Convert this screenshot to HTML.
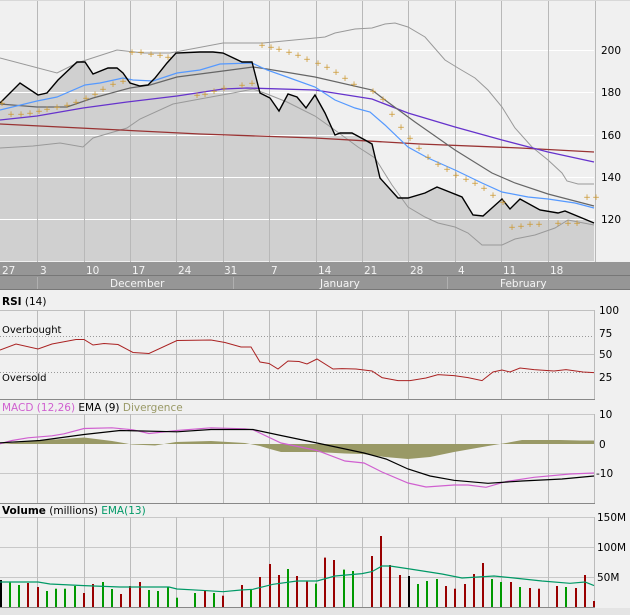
<!DOCTYPE html>
<html><head><style>
html,body{margin:0;padding:0;background:#f0f0f0;}
svg{display:block;font-family:"DejaVu Sans","Liberation Sans",sans-serif;}
</style></head><body>
<svg width="630" height="615" viewBox="0 0 630 615" xmlns="http://www.w3.org/2000/svg">
<rect width="630" height="615" fill="#f0f0f0"/>
<!-- main plot -->
<polygon fill="#d0d0d0" points="0,103 20,83 38,95 47,93 58,80 77,62 85,62 93,74 108,68 117,68 123,73 130,83 140,86 148,85 155,78 167,63 176,53 200,52 207,52 213,52 223,53 242,62 252,62 260,93 270,98 279,111 288,94 297,97 306,108 315,95 325,113 335,135 340,133 352,133 365,140 372,144 380,178 398,198 408,198 425,193 437,187 462,197 473,215 483,216 502,199 510,209 520,199 540,210 558,213 565,211 582,218 594,223 594,261 0,261"/>
<g stroke="#ffffff" stroke-width="1">
<line x1="0" y1="50.5" x2="594" y2="50.5"/><line x1="0" y1="92.5" x2="594" y2="92.5"/><line x1="0" y1="135.5" x2="594" y2="135.5"/><line x1="0" y1="177.5" x2="594" y2="177.5"/><line x1="0" y1="219.5" x2="594" y2="219.5"/>
</g>
<g stroke="#b8b8b8" stroke-width="1">
<line x1="37.5" y1="0" x2="37.5" y2="262"/><line x1="84.5" y1="0" x2="84.5" y2="262"/><line x1="130.5" y1="0" x2="130.5" y2="262"/><line x1="176.5" y1="0" x2="176.5" y2="262"/><line x1="223.5" y1="0" x2="223.5" y2="262"/><line x1="269.5" y1="0" x2="269.5" y2="262"/><line x1="316.5" y1="0" x2="316.5" y2="262"/><line x1="362.5" y1="0" x2="362.5" y2="262"/><line x1="408.5" y1="0" x2="408.5" y2="262"/><line x1="455.5" y1="0" x2="455.5" y2="262"/><line x1="501.5" y1="0" x2="501.5" y2="262"/><line x1="548.5" y1="0" x2="548.5" y2="262"/>
<line x1="595.5" y1="0" x2="595.5" y2="262"/>
</g>
<line x1="0" y1="0.5" x2="630" y2="0.5" stroke="#d8d8d8"/>
<g fill="none" stroke-width="1">
<polyline stroke="#999" points="0,58 57,73 77,63 117,50 143,53 170,53 223,43 263,43 315,38 325,37 335,33 355,29 372,28 385,24 395,23 408,27 425,37 445,60 458,68 475,78 488,90 502,107 515,128 532,147 548,160 562,173 567,181 578,184 594,184"/>
<polyline stroke="#999" points="0,148 33,146 60,143 83,147 93,138 127,128 140,119 173,104 200,99 233,93 253,89 267,94 287,102 315,116 332,128 358,147 375,158 392,185 408,207 425,217 438,223 455,227 468,233 482,245 502,245 515,239 535,235 555,228 568,220 594,225"/>
<polyline stroke="#993333" stroke-width="1.3" points="0,124 100,129 200,134 315,138 420,144 520,148 594,152"/>
<polyline stroke="#6633cc" stroke-width="1.3" points="0,120 37,116 83,108 127,102 177,96 223,89 247,88 315,90 372,99 408,113 455,127 502,140 548,152 594,162"/>
<polyline stroke="#666" stroke-width="1.2" points="0,104 37,107 67,107 93,98 130,88 150,85 177,77 223,71 253,67 267,69 315,77 372,90 385,100 415,122 455,150 492,173 515,183 548,194 594,206"/>
<polyline stroke="#5599ff" stroke-width="1.2" points="0,110 37,101 57,97 85,85 100,83 123,78 133,80 153,81 177,73 200,70 220,64 252,63 267,70 287,77 315,87 335,100 355,108 370,112 385,125 408,147 428,158 455,170 482,183 502,192 528,197 548,199 575,203 594,208"/>
<polyline stroke="#000" stroke-width="1.4" points="0,103 20,83 38,95 47,93 58,80 77,62 85,62 93,74 108,68 117,68 123,73 130,83 140,86 148,85 155,78 167,63 176,53 200,52 207,52 213,52 223,53 242,62 252,62 260,93 270,98 279,111 288,94 297,97 306,108 315,95 325,113 335,135 340,133 352,133 365,140 372,144 380,178 398,198 408,198 425,193 437,187 462,197 473,215 483,216 502,199 510,209 520,199 540,210 558,213 565,211 582,218 594,223"/>
</g>
<g fill="#cc9933" font-size="9" text-anchor="middle" font-family="DejaVu Sans,sans-serif">
<text x="2" y="106">+</text><text x="11" y="117">+</text><text x="21" y="117">+</text><text x="30" y="116">+</text><text x="39" y="114">+</text><text x="47" y="112">+</text><text x="57" y="110">+</text><text x="67" y="108">+</text><text x="76" y="105">+</text><text x="86" y="101">+</text><text x="95" y="97">+</text><text x="103" y="92">+</text><text x="113" y="87">+</text><text x="123" y="84">+</text><text x="132" y="55">+</text><text x="141" y="55">+</text><text x="151" y="57">+</text><text x="160" y="58">+</text><text x="168" y="60">+</text><text x="197" y="98">+</text><text x="205" y="97">+</text><text x="214" y="94">+</text><text x="224" y="91">+</text><text x="242" y="88">+</text><text x="252" y="86">+</text><text x="262" y="48">+</text><text x="271" y="50">+</text><text x="279" y="52">+</text><text x="289" y="55">+</text><text x="298" y="58">+</text><text x="307" y="62">+</text><text x="318" y="66">+</text><text x="327" y="70">+</text><text x="336" y="75">+</text><text x="345" y="81">+</text><text x="354" y="87">+</text><text x="373" y="94">+</text><text x="383" y="102">+</text><text x="392" y="117">+</text><text x="401" y="130">+</text><text x="410" y="141">+</text><text x="419" y="151">+</text><text x="428" y="160">+</text><text x="438" y="167">+</text><text x="447" y="172">+</text><text x="456" y="178">+</text><text x="466" y="182">+</text><text x="475" y="186">+</text><text x="484" y="191">+</text><text x="493" y="198">+</text><text x="503" y="205">+</text><text x="512" y="230">+</text><text x="521" y="229">+</text><text x="530" y="227">+</text><text x="539" y="227">+</text><text x="558" y="226">+</text><text x="568" y="226">+</text><text x="577" y="226">+</text><text x="587" y="200">+</text><text x="596" y="200">+</text>
</g>
<g font-size="10.5" fill="#000">
<text x="601" y="54">200</text><text x="601" y="96">180</text><text x="601" y="139">160</text><text x="601" y="181">140</text><text x="601" y="223">120</text>
</g>
<!-- date bars -->
<rect x="0" y="262" width="630" height="28" fill="#969696"/>
<line x1="0" y1="275.5" x2="630" y2="275.5" stroke="#777"/>
<line x1="0" y1="289.5" x2="630" y2="289.5" stroke="#777"/>
<g stroke="#b0b0b0"><line x1="37.5" y1="277" x2="37.5" y2="289"/><line x1="233.5" y1="277" x2="233.5" y2="289"/><line x1="447.5" y1="277" x2="447.5" y2="289"/></g>
<g fill="#f4f4f4" font-size="10.5">
<text x="2" y="274">27</text><text x="40" y="274">3</text><text x="86" y="274">10</text><text x="132" y="274">17</text><text x="178" y="274">24</text><text x="224" y="274">31</text><text x="271" y="274">7</text><text x="318" y="274">14</text><text x="364" y="274">21</text><text x="410" y="274">28</text><text x="458" y="274">4</text><text x="503" y="274">11</text><text x="550" y="274">18</text>
<text x="110" y="287">December</text><text x="320" y="287">January</text><text x="500" y="287">February</text>
</g>
<!-- RSI -->
<g stroke="#c0c0c0"><line x1="0" y1="310.5" x2="594" y2="310.5"/><line x1="0" y1="354.5" x2="594" y2="354.5"/></g>
<g stroke="#999" stroke-dasharray="1,2"><line x1="0" y1="336.5" x2="594" y2="336.5"/><line x1="0" y1="372.5" x2="594" y2="372.5"/></g>
<g stroke="#bbb" id="vg">
<line x1="37.5" y1="310" x2="37.5" y2="400"/><line x1="84.5" y1="310" x2="84.5" y2="400"/><line x1="130.5" y1="310" x2="130.5" y2="400"/><line x1="176.5" y1="310" x2="176.5" y2="400"/><line x1="223.5" y1="310" x2="223.5" y2="400"/><line x1="269.5" y1="310" x2="269.5" y2="400"/><line x1="316.5" y1="310" x2="316.5" y2="400"/><line x1="362.5" y1="310" x2="362.5" y2="400"/><line x1="408.5" y1="310" x2="408.5" y2="400"/><line x1="455.5" y1="310" x2="455.5" y2="400"/><line x1="501.5" y1="310" x2="501.5" y2="400"/><line x1="548.5" y1="310" x2="548.5" y2="400"/><line x1="594.5" y1="310" x2="594.5" y2="400"/>
</g>
<line x1="0" y1="399.5" x2="595" y2="399.5" stroke="#888"/>
<polyline fill="none" stroke="#aa2222" stroke-width="1" points="0,350 16,344 38,349 52,344 76,339.5 84,339.5 93,345 104,343.5 118,344.5 133,352.5 149,353.5 177,340.5 211,340 225,342.5 241,347 251,347 260,362 269,363.5 278,369 288,361 299,361.5 307,364 317,359 333,369 342,368.6 356,369 372,371 382,377.6 398,380.6 410,380.6 426,378 438,374.6 454,375.6 468,377.6 482,380.6 493,372 502,370 510,372 520,368 534,369.6 554,371 566,369.6 583,372 594,372.6"/>
<text x="2" y="305" font-size="10.5"><tspan font-weight="bold">RSI</tspan> (14)</text>
<text x="2" y="333" font-size="10">Overbought</text>
<text x="2" y="381" font-size="10">Oversold</text>
<g font-size="10.5"><text x="599" y="314">100</text><text x="599" y="337">75</text><text x="599" y="358">50</text><text x="599" y="381">25</text></g>
<!-- MACD -->
<g stroke="#c8c8c8"><line x1="0" y1="414.5" x2="594" y2="414.5"/><line x1="0" y1="473.5" x2="594" y2="473.5"/></g>
<g stroke="#bbb">
<line x1="37.5" y1="414" x2="37.5" y2="503"/><line x1="84.5" y1="414" x2="84.5" y2="503"/><line x1="130.5" y1="414" x2="130.5" y2="503"/><line x1="176.5" y1="414" x2="176.5" y2="503"/><line x1="223.5" y1="414" x2="223.5" y2="503"/><line x1="269.5" y1="414" x2="269.5" y2="503"/><line x1="316.5" y1="414" x2="316.5" y2="503"/><line x1="362.5" y1="414" x2="362.5" y2="503"/><line x1="408.5" y1="414" x2="408.5" y2="503"/><line x1="455.5" y1="414" x2="455.5" y2="503"/><line x1="501.5" y1="414" x2="501.5" y2="503"/><line x1="548.5" y1="414" x2="548.5" y2="503"/><line x1="594.5" y1="414" x2="594.5" y2="503"/>
</g>
<line x1="0" y1="503.5" x2="595" y2="503.5" stroke="#888"/>
<polygon fill="#999966" points="0,444 40,440.5 84,437.5 112,441 132,444.5 155,445.5 176,442 211,441 245,443 260,446 270,449 281,452 317,452 345,453.5 363,454 385,457 408,459 430,457 454,452 488,446 506,443 522,440 560,440 580,440.5 594,440.5 594,444"/>
<polyline fill="none" stroke="#d060d0" stroke-width="1.2" points="0,443.8 12,440.5 28,437.8 52,435.8 64,433.8 84,428.5 112,427.8 133,429.8 149,433.5 177,430.5 211,427.8 245,428.8 253,429.8 281,443 317,450.5 345,461 364,463 382,472 408,483 426,487 454,485 468,485 486,487.3 506,481.6 534,477.3 570,474 594,473"/>
<polyline fill="none" stroke="#000" stroke-width="1.2" points="0,442.8 40,440.5 84,434.5 120,430.5 177,431.8 211,429.5 253,429.5 281,435.5 317,443 364,453 386,459 408,469 430,476 454,480.3 488,483.3 522,481 562,479 594,476"/>
<text x="2" y="411" font-size="10.5"><tspan fill="#d060d0">MACD (12,26)</tspan> <tspan fill="#000">EMA (9)</tspan> <tspan fill="#999966">Divergence</tspan></text>
<g font-size="10.5"><text x="599" y="418">10</text><text x="599" y="448">0</text><text x="596" y="477">-10</text></g>
<!-- Volume -->
<g stroke="#c8c8c8"><line x1="0" y1="517.5" x2="594" y2="517.5"/><line x1="0" y1="547.5" x2="594" y2="547.5"/><line x1="0" y1="577.5" x2="594" y2="577.5"/></g>
<g stroke="#bbb">
<line x1="37.5" y1="517" x2="37.5" y2="607"/><line x1="84.5" y1="517" x2="84.5" y2="607"/><line x1="130.5" y1="517" x2="130.5" y2="607"/><line x1="176.5" y1="517" x2="176.5" y2="607"/><line x1="223.5" y1="517" x2="223.5" y2="607"/><line x1="269.5" y1="517" x2="269.5" y2="607"/><line x1="316.5" y1="517" x2="316.5" y2="607"/><line x1="362.5" y1="517" x2="362.5" y2="607"/><line x1="408.5" y1="517" x2="408.5" y2="607"/><line x1="455.5" y1="517" x2="455.5" y2="607"/><line x1="501.5" y1="517" x2="501.5" y2="607"/><line x1="548.5" y1="517" x2="548.5" y2="607"/><line x1="594.5" y1="517" x2="594.5" y2="607"/>
</g>
<g stroke-width="2">
<line x1="1" y1="580" x2="1" y2="607" stroke="#000"/>
<g stroke="#009900">
<line x1="10" y1="582.6" x2="10" y2="607"/><line x1="19" y1="585" x2="19" y2="607"/><line x1="47" y1="591" x2="47" y2="607"/><line x1="56" y1="588.7" x2="56" y2="607"/><line x1="65" y1="588.7" x2="65" y2="607"/><line x1="75" y1="586" x2="75" y2="607"/><line x1="103" y1="582" x2="103" y2="607"/><line x1="112" y1="589" x2="112" y2="607"/><line x1="149" y1="590" x2="149" y2="607"/><line x1="158" y1="591" x2="158" y2="607"/><line x1="168" y1="587" x2="168" y2="607"/><line x1="177" y1="597.7" x2="177" y2="607"/><line x1="195" y1="593" x2="195" y2="607"/><line x1="214" y1="593" x2="214" y2="607"/><line x1="251" y1="590" x2="251" y2="607"/><line x1="288" y1="569" x2="288" y2="607"/><line x1="316" y1="583.6" x2="316" y2="607"/><line x1="344" y1="569.6" x2="344" y2="607"/><line x1="353" y1="571" x2="353" y2="607"/><line x1="418" y1="584" x2="418" y2="607"/><line x1="427" y1="581" x2="427" y2="607"/><line x1="437" y1="579" x2="437" y2="607"/><line x1="492" y1="579" x2="492" y2="607"/><line x1="501" y1="582" x2="501" y2="607"/><line x1="520" y1="587" x2="520" y2="607"/><line x1="566" y1="587" x2="566" y2="607"/>
</g>
<g stroke="#990000">
<line x1="28" y1="583" x2="28" y2="607"/><line x1="38" y1="587" x2="38" y2="607"/><line x1="84" y1="593" x2="84" y2="607"/><line x1="93" y1="584" x2="93" y2="607"/><line x1="121" y1="594" x2="121" y2="607"/><line x1="130" y1="586" x2="130" y2="607"/><line x1="140" y1="582" x2="140" y2="607"/><line x1="205" y1="591" x2="205" y2="607"/><line x1="223" y1="595.7" x2="223" y2="607"/><line x1="242" y1="585" x2="242" y2="607"/><line x1="260" y1="577" x2="260" y2="607"/><line x1="270" y1="564" x2="270" y2="607"/><line x1="279" y1="575" x2="279" y2="607"/><line x1="297" y1="576" x2="297" y2="607"/><line x1="307" y1="581.6" x2="307" y2="607"/><line x1="325" y1="557.6" x2="325" y2="607"/><line x1="334" y1="560" x2="334" y2="607"/><line x1="372" y1="556" x2="372" y2="607"/><line x1="381" y1="536" x2="381" y2="607"/><line x1="390" y1="565" x2="390" y2="607"/><line x1="400" y1="575" x2="400" y2="607"/><line x1="446" y1="586" x2="446" y2="607"/><line x1="455" y1="588.7" x2="455" y2="607"/><line x1="465" y1="584" x2="465" y2="607"/><line x1="474" y1="574" x2="474" y2="607"/><line x1="483" y1="563" x2="483" y2="607"/><line x1="511" y1="582" x2="511" y2="607"/><line x1="530" y1="588" x2="530" y2="607"/><line x1="539" y1="588.7" x2="539" y2="607"/><line x1="557" y1="586" x2="557" y2="607"/><line x1="576" y1="588" x2="576" y2="607"/><line x1="585" y1="575" x2="585" y2="607"/><line x1="594" y1="601" x2="594" y2="607"/>
</g>
<line x1="409" y1="576" x2="409" y2="607" stroke="#000"/>
</g>
<polyline fill="none" stroke="#009966" stroke-width="1.2" points="0,582 38,582 50,584 84,585.6 120,587 169,587 177,589 201,590.3 223,591.7 241,590 253,589.3 273,584.3 297,581 317,581 335,576 362,573.6 372,571.6 382,566 390,566 410,569 442,574 462,578 494,576 514,578 542,581 570,583.3 585,582 594,585.6"/>
<line x1="0" y1="607.5" x2="595" y2="607.5" stroke="#888"/>
<rect x="0" y="608" width="630" height="7" fill="#e4e4e4"/>
<text x="2" y="514" font-size="10.5"><tspan font-weight="bold">Volume</tspan> (millions) <tspan fill="#009966">EMA(13)</tspan></text>
<g font-size="10.5"><text x="597" y="521">150M</text><text x="597" y="551">100M</text><text x="597" y="581">50M</text></g>
</svg>
</body></html>
